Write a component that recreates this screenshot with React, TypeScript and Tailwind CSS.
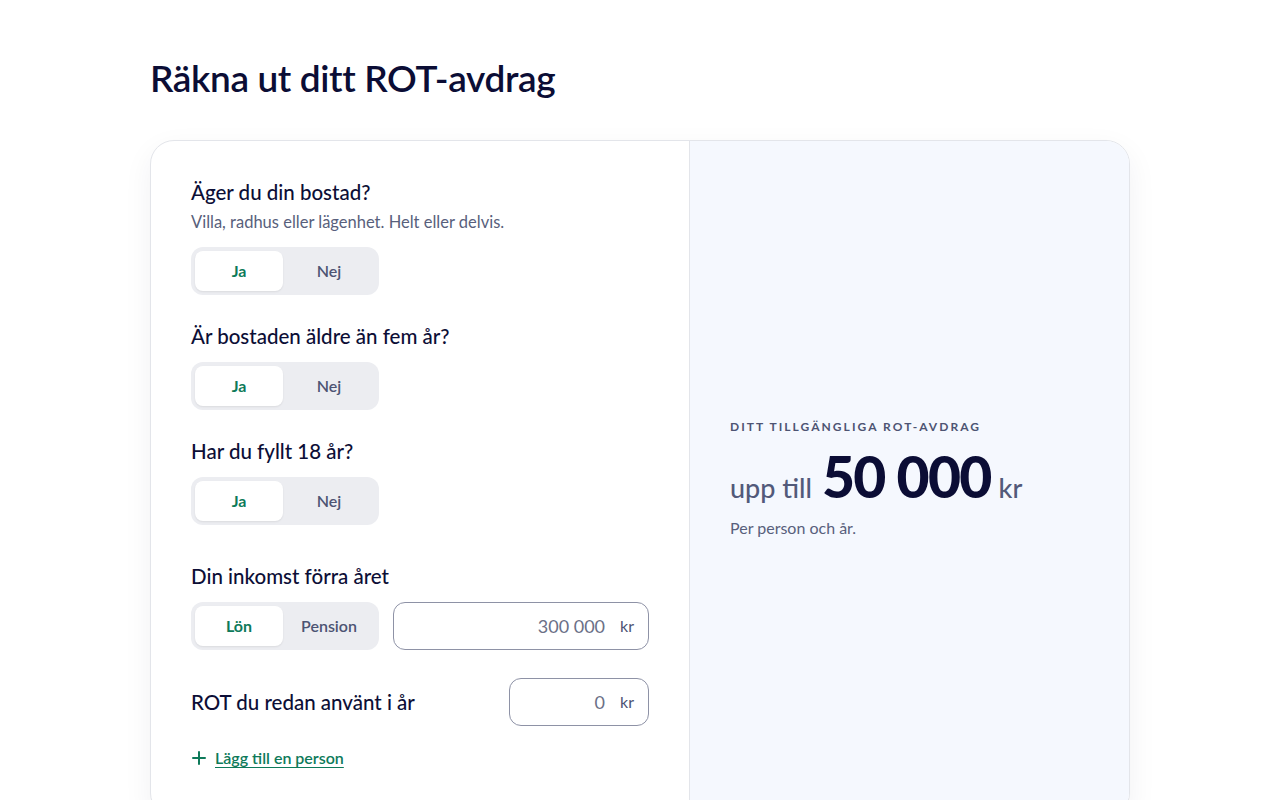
import React from "react";

const font = { fontFamily: "Lato, 'Noto Sans', sans-serif" };

function Toggle({ a, b }: { a: string; b: string }) {
  return (
    <div className="flex w-[188px] rounded-xl bg-[#ecedf1] p-1">
      <div className="flex h-10 w-[88px] items-center justify-center rounded-lg bg-white text-base font-bold text-[#0e7a5a] shadow-[0_1px_2px_rgba(0,0,0,0.08)]">
        {a}
      </div>
      <div className="flex h-10 flex-1 items-center justify-center text-base font-semibold text-[#4d5473]">
        {b}
      </div>
    </div>
  );
}

function Q({ children }: { children: React.ReactNode }) {
  return <div className="text-[20.5px] leading-7 font-medium text-[#0c0e36]">{children}</div>;
}

export default function App() {
  return (
    <div className="min-h-screen bg-white" style={font}>
      <div className="mx-auto w-[980px] pt-[54px]">
        <h1 className="text-[37px] leading-[48px] font-semibold tracking-[-0.01em] text-[#0b0d35]">
          Räkna ut ditt ROT-avdrag
        </h1>
        <div className="mt-[38px] flex overflow-hidden rounded-3xl border border-[#e3e5ea] bg-white shadow-[0_10px_30px_rgba(20,30,60,0.06)]">
          <div className="w-[539px] border-r border-[#e3e5ea] px-10 pt-[37px] pb-12">
            <Q>Äger du din bostad?</Q>
            <div className="mt-1 text-[16.5px] leading-6 text-[#585f7c]">
              Villa, radhus eller lägenhet. Helt eller delvis.
            </div>
            <div className="mt-[13px]">
              <Toggle a="Ja" b="Nej" />
            </div>
            <div className="mt-[27px]">
              <Q>Är bostaden äldre än fem år?</Q>
            </div>
            <div className="mt-3">
              <Toggle a="Ja" b="Nej" />
            </div>
            <div className="mt-[27px]">
              <Q>Har du fyllt 18 år?</Q>
            </div>
            <div className="mt-3">
              <Toggle a="Ja" b="Nej" />
            </div>
            <div className="mt-[37px]">
              <Q>Din inkomst förra året</Q>
            </div>
            <div className="mt-3 flex gap-[14px]">
              <Toggle a="Lön" b="Pension" />
              <div className="flex h-12 flex-1 items-center justify-end gap-[15px] rounded-xl border border-[#8e92a6] px-[14px] text-lg text-[#6b7087]">
                <span>300 000</span>
                <span className="text-base text-[#4d5473]">kr</span>
              </div>
            </div>
            <div className="mt-7 flex items-center justify-between">
              <Q>ROT du redan använt i år</Q>
              <div className="flex h-12 w-[140px] items-center justify-end gap-[15px] rounded-xl border border-[#8e92a6] px-[14px] text-lg text-[#6b7087]">
                <span>0</span>
                <span className="text-base text-[#4d5473]">kr</span>
              </div>
            </div>
            <div className="mt-[22px] flex items-center gap-2 text-[#0e7a5a]">
              <svg width="16" height="16" viewBox="0 0 16 16" fill="none" stroke="currentColor" strokeWidth="2" strokeLinecap="round">
                <path d="M8 2v12M2 8h12" />
              </svg>
              <span className="text-base leading-5 font-semibold underline underline-offset-[3px]">
                Lägg till en person
              </span>
            </div>
          </div>
          <div className="flex flex-1 flex-col justify-center bg-[#f5f8fe] px-10">
            <div className="text-[12px] font-bold tracking-[0.17em] text-[#4d5473]">
              DITT TILLGÄNGLIGA ROT-AVDRAG
            </div>
            <div className="mt-1 flex items-baseline">
              <span className="text-[27px] font-medium text-[#525a7a]">upp till</span>
              <span className="ml-[10px] text-[57px] leading-[72px] font-black tracking-[-0.03em] text-[#0b0d35]">
                50 000
              </span>
              <span className="ml-[8px] text-[27px] font-medium text-[#525a7a]">kr</span>
            </div>
            <div className="mt-[4px] text-base text-[#585f7c]">Per person och år.</div>
          </div>
        </div>
      </div>
    </div>
  );
}
